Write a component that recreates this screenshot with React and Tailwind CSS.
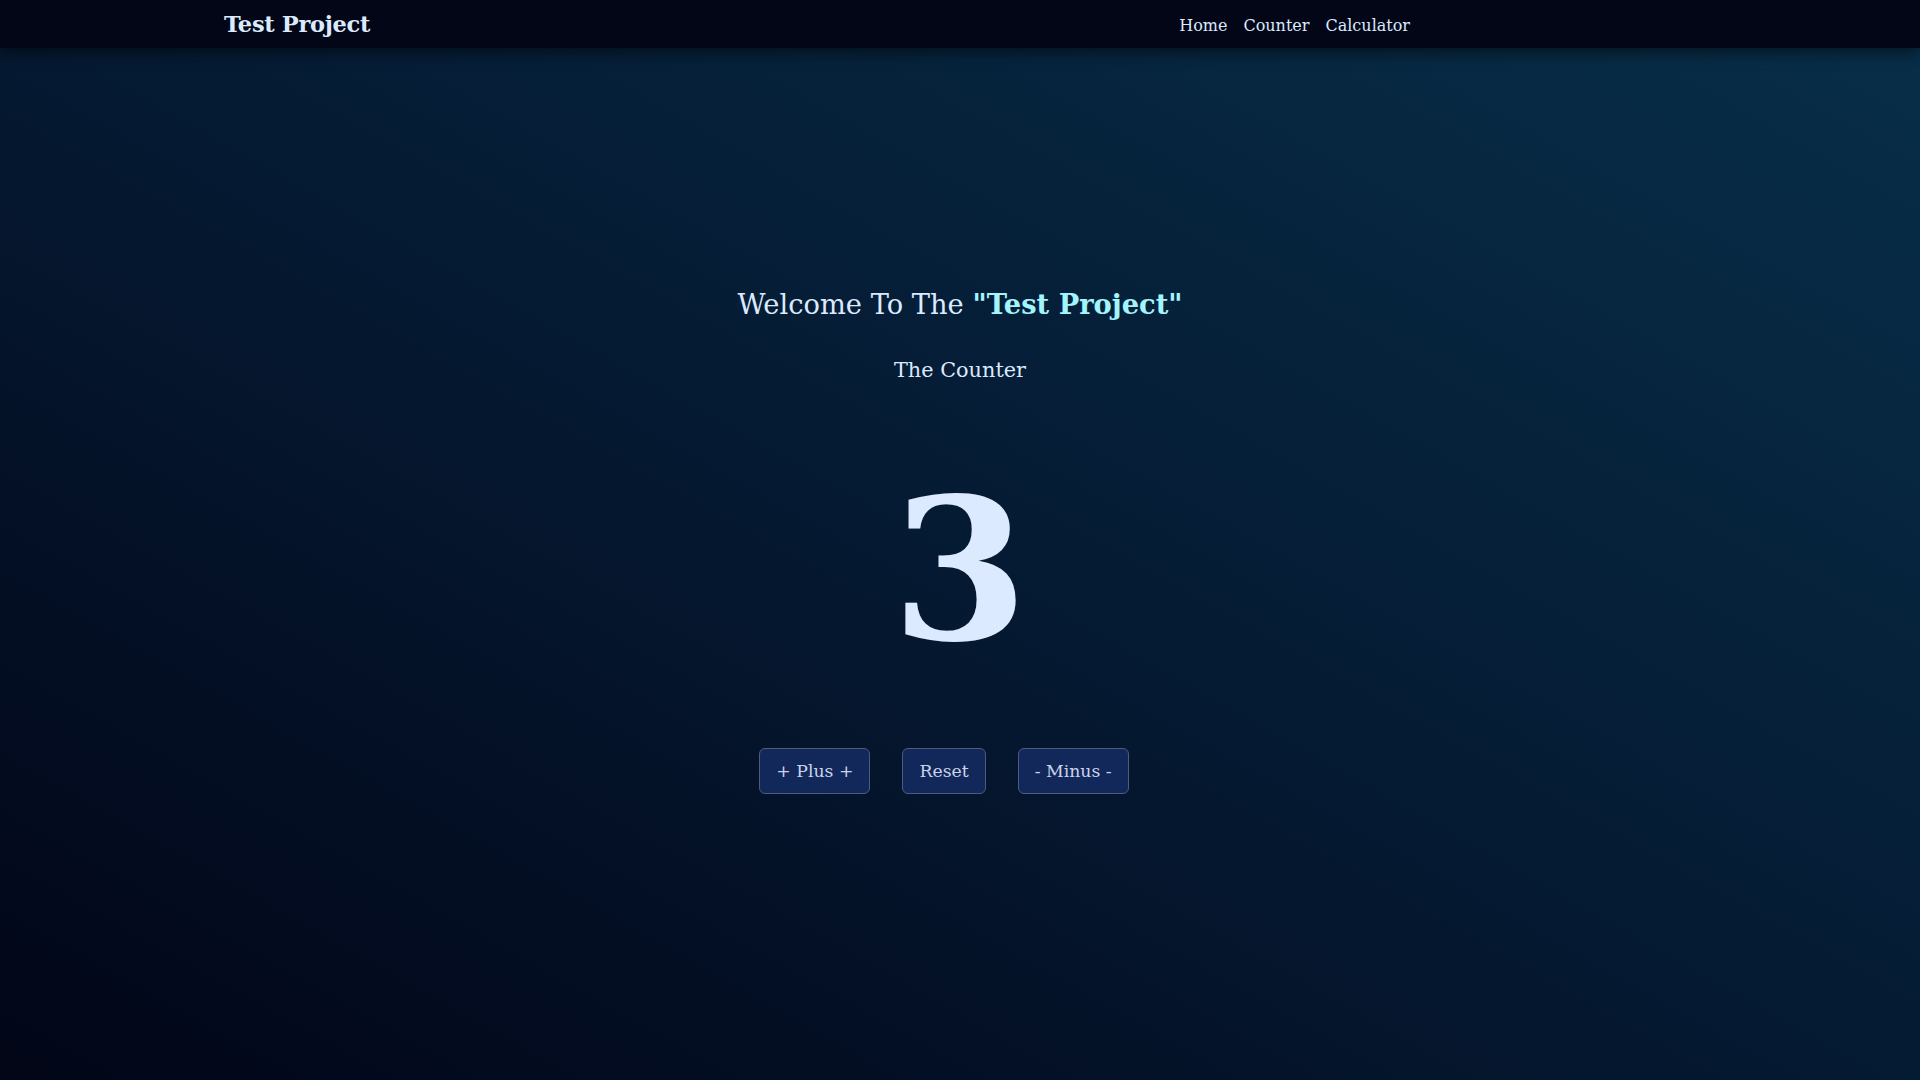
import React, { useState } from "react";

const serif = { fontFamily: '"DejaVu Serif", "Liberation Serif", serif' };

export default function App() {
  const [count, setCount] = useState(3);

  return (
    <div
      className="min-h-screen flex flex-col bg-linear-to-tr from-[#020617] via-[#051a33] to-[#082f49] text-blue-100"
      style={serif}
    >
      {/* Navbar */}
      <nav className="relative z-10 h-12 shrink-0 bg-[#020617] shadow-[0_4px_16px_rgba(0,0,0,0.55)]">
        <div className="h-full flex items-center justify-between pt-[2px] pl-[224px] pr-[510px]">
          <a className="text-[22.5px] font-bold text-blue-100 tracking-[-0.3px]">Test Project</a>
          <div className="flex items-center gap-4 pt-[2px] text-[16px] text-blue-100">
            <a>Home</a>
            <a>Counter</a>
            <a>Calculator</a>
          </div>
        </div>
      </nav>

      {/* Main */}
      <main className="flex-1 flex flex-col items-center pt-[237px]">
        <h1 className="text-[27.3px] leading-[38px] text-blue-100">
          Welcome To The <span className="font-bold text-cyan-200">"Test Project"</span>
        </h1>
        <h2 className="mt-[30px] text-[20.8px] leading-8 text-blue-100">The Counter</h2>

        <div className="mt-[74px] h-[220px] flex items-center justify-center text-[196px] leading-none font-bold text-blue-100">
          {count}
        </div>

        <div className="mt-[68px] flex items-center">
          <button
            onClick={() => setCount(count + 1)}
            className="mr-8 px-4 py-2 text-[17.3px] leading-7 rounded-md border border-[#4b5b82] bg-[#13285a] text-[#c9d3ea]"
          >
            + Plus +
          </button>
          <button
            onClick={() => setCount(0)}
            className="mr-8 px-4 py-2 text-[17.3px] leading-7 rounded-md border border-[#4b5b82] bg-[#13285a] text-[#c9d3ea]"
          >
            Reset
          </button>
          <button
            onClick={() => setCount(count - 1)}
            className="mr-8 px-4 py-2 text-[17.3px] leading-7 rounded-md border border-[#4b5b82] bg-[#13285a] text-[#c9d3ea]"
          >
            - Minus -
          </button>
        </div>
      </main>
    </div>
  );
}
